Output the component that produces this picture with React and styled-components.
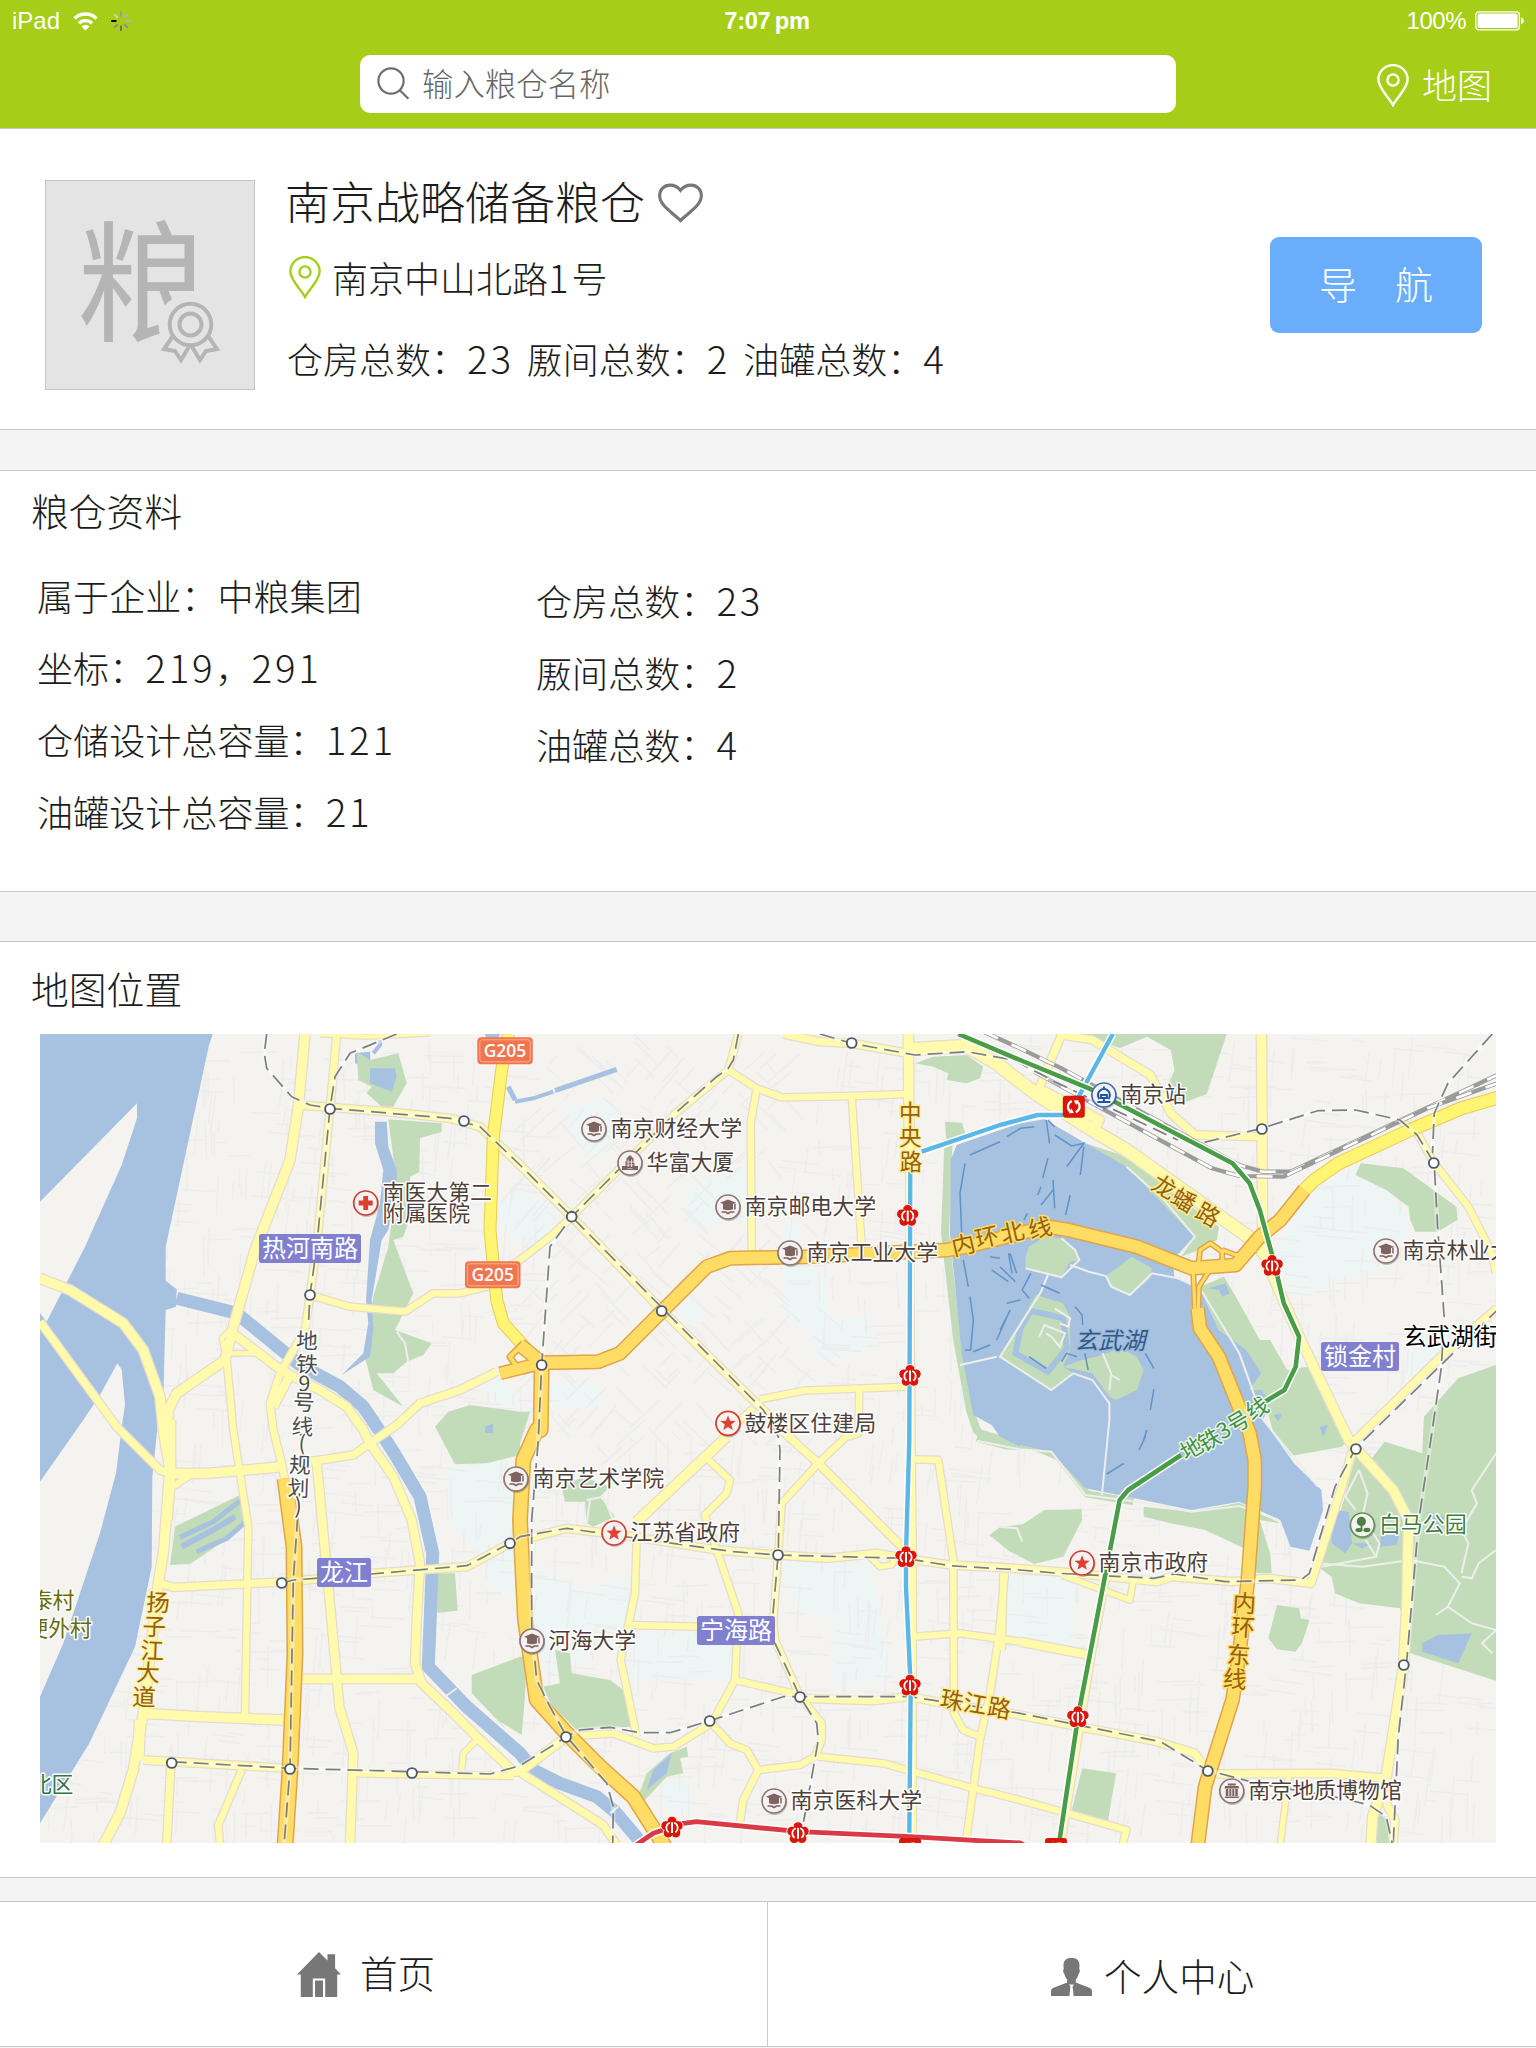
import React from "react";
import styled, { createGlobalStyle, css } from "styled-components";

const GlobalStyle = createGlobalStyle`
  *, *::before, *::after { box-sizing: border-box; }
  body {
    margin: 0;
    background: #f4f4f4;
    color: #1c1c1c;
    font-family: "Noto Sans CJK SC", "Liberation Sans", sans-serif;
    font-weight: 300;
  }
`;

/* ---------- page frame ---------- */

const Page = styled.div`
  width: 1536px;
  height: 2048px;
  display: flex;
  flex-direction: column;
  overflow: hidden;
`;

const Header = styled.header`
  height: 129px;
  background: #a6ce19;
  border-bottom: 1px solid #c8c8c8;
  color: #fff;
  display: flex;
  flex-direction: column;
`;

const StatusBar = styled.div`
  height: 40px;
  padding: 1px 11px 0 12px;
  display: grid;
  grid-template-columns: 1fr auto 1fr;
  align-items: center;
  font-family: "Liberation Sans", sans-serif;
  font-size: 24px;
  font-weight: 400;
  line-height: 40px;
`;

const StatusGroup = styled.div`
  display: flex;
  align-items: center;
  gap: ${(p) => p.$gap}px;
  justify-content: ${(p) => (p.$end ? "flex-end" : "flex-start")};
  letter-spacing: ${(p) => (p.$end ? "-0.5px" : "0")};
  svg { display: block; flex: none; }
`;

const Clock = styled.div`
  margin-right: 3px;
  font-weight: 700;
  font-size: 23.7px;
  letter-spacing: -0.3px;
  word-spacing: -2px;
`;

const SearchRow = styled.div`
  height: 88px;
  display: grid;
  grid-template-columns: 1fr 816px 1fr;
  align-items: center;
`;

const SearchBox = styled.div`
  grid-column: 2;
  height: 58px;
  padding-left: 16px;
  display: flex;
  align-items: center;
  gap: 12px;
  background: #fff;
  border-radius: 10px;
  color: #666;
  font-size: 31.4px;
  line-height: 50px;
  span { margin-top: -3px; }
`;

const MapLink = styled.div`
  justify-self: end;
  margin-right: 44px;
  padding-top: 3px;
  display: flex;
  align-items: center;
  gap: 13px;
  font-size: 35px;
  line-height: 50px;
  span { margin-top: -3px; }
`;

const Gap = styled.div`
  height: ${(p) => p.$h}px;
  flex: none;
`;

const Section = styled.section`
  flex: none;
  height: ${(p) => p.$h}px;
  background: #fff;
  border-bottom: 1px solid #c8c8c8;
  ${(p) => p.$topLine && css`border-top: 1px solid #c8c8c8;`}
`;

/* ---------- profile ---------- */

const Profile = styled(Section)`
  display: flex;
  align-items: flex-start;
  padding: 51px 54px 0 45px;
`;

const Thumb = styled.div`
  width: 210px;
  height: 210px;
  flex: none;
  background: #e4e4e4;
  border: 1px solid #c4c4c4;
  svg { display: block; }
`;

const Info = styled.div`
  flex: 1;
  padding-left: 30px;
  display: flex;
  flex-direction: column;
`;

const Name = styled.h1`
  margin: -6px 0 0;
  height: 54px;
  display: flex;
  align-items: center;
  gap: 12px;
  font-size: 45px;
  font-weight: 300;
  line-height: 54px;
  svg { margin-top: 5px; }
`;

const Address = styled.div`
  margin-top: 25px;
  padding-left: 4px;
  height: 48px;
  display: flex;
  align-items: center;
  gap: 11px;
  font-size: 36px;
  line-height: 44px;
  span { margin-top: -1px; }
`;

const Counts = styled.div`
  margin-top: 33px;
  padding-left: 2px;
  display: flex;
  gap: 13px;
  font-size: 36px;
  line-height: 48px;
`;

const Digits = styled.span`
  font-size: 38.5px;
  line-height: 1;
  letter-spacing: 2.8px;
`;

const NavigateButton = styled.button`
  margin-top: 57px;
  width: 212px;
  height: 96px;
  padding: 0 0 5px 49px;
  text-align: left;
  border: 0;
  border-radius: 9px;
  background: #6aadfb;
  color: #fff;
  font: inherit;
  font-size: 38px;
  letter-spacing: 38px;
  white-space: nowrap;
`;

/* ---------- details ---------- */

const SectionTitle = styled.h2`
  margin: 0;
  padding-left: 31px;
  font-size: 37.8px;
  font-weight: 300;
  line-height: 48px;
`;

const Details = styled(Section)`
  padding-top: 15px;
`;

const DetailColumns = styled.div`
  display: grid;
  grid-template-columns: 499px 1fr;
  align-items: start;
  padding: 25px 0 0 37px;
`;

const DetailList = styled.ul`
  margin: ${(p) => (p.$drop ? 5 : 0)}px 0 0;
  padding: 0;
  list-style: none;
  font-size: 36.1px;
  line-height: 72px;
`;

/* ---------- map ---------- */

const MapSection = styled(Section)`
  padding-top: 22px;
`;

const MapFrame = styled.div`
  margin: 22px 0 0 40px;
  width: 1456px;
  height: 809px;
  svg { display: block; }
`;

/* ---------- bottom tabs ---------- */

const Tabs = styled.nav`
  flex: none;
  height: 146px;
  display: grid;
  grid-template-columns: 768px 1fr;
  background: #fff;
  border-top: 1px solid #c8c8c8;
  border-bottom: 1px solid #c8c8c8;
`;

const Tab = styled.a`
  display: flex;
  align-items: flex-start;
  padding: ${(p) => p.$pad};
  gap: ${(p) => p.$gap}px;
  font-size: 37.6px;
  line-height: 48px;
  border-right: ${(p) => (p.$divider ? "1px solid #c8c8c8" : "0")};
  svg { display: block; flex: none; margin-top: ${(p) => p.$iconTop}px; }
`;

/* ---------- icons ---------- */

const WifiIcon = () => (
  <svg width="25" height="19" viewBox="0 0 25 19" fill="none" stroke="#fff" strokeWidth="3.4">
    <path d="M1.5 6.6a15.6 15.6 0 0 1 22 0" />
    <path d="M6 11.3a9.2 9.2 0 0 1 13 0" />
    <path d="M12.5 18.6l-4-4.2a5.7 5.7 0 0 1 8 0z" fill="#fff" stroke="none" />
  </svg>
);

const spokes = ["#9a9a9a", "#b4b4b4", "#b4b4b4", "#8c8c8c", "#6a6a6a", "#8a8f7a", "#000", "#d0dca0"];
const Spinner = () => (
  <svg width="20" height="20" viewBox="-10 -10 20 20">
    {spokes.map((c, i) => (
      <line key={i} x1="0" y1="-4.6" x2="0" y2="-9.8" stroke={c} strokeWidth="1.9" transform={`rotate(${i * 45})`} />
    ))}
  </svg>
);

const BatteryIcon = () => (
  <svg width="50" height="20" viewBox="0 0 50 20">
    <rect x="0.8" y="0.8" width="43.6" height="18" rx="3" fill="none" stroke="#fff" strokeWidth="1.3" />
    <rect x="2.6" y="2.6" width="40" height="14.4" rx="1.6" fill="#fff" />
    <path d="M46 6.6c3.8 1 3.8 5.6 0 6.6z" fill="#fff" />
  </svg>
);

const SearchIcon = () => (
  <svg width="34" height="34" viewBox="0 0 34 34" fill="none" stroke="#6e6e6e" strokeWidth="2.2">
    <circle cx="15" cy="14" r="12.6" />
    <path d="M23.8 23.2l8.6 8.6" />
  </svg>
);

const PinIcon = ({ color }) => (
  <svg width="32" height="43" viewBox="0 0 32 43" fill="none" stroke={color} strokeWidth="2.4">
    <path d="M16 41C12 33 1.4 24.6 1.4 15.6a14.6 14.6 0 0 1 29.2 0C30.6 24.6 20 33 16 41z" />
    <circle cx="16" cy="16" r="5.6" />
  </svg>
);

const HeartIcon = () => (
  <svg width="47" height="41" viewBox="0 0 48 42" fill="none" stroke="#777" strokeWidth="3.2">
    <path d="M24 38.5C17 31 2.6 23.5 2.6 12.8 2.6 6.8 7.4 2.2 13.2 2.2c4.5 0 8.2 2 10.8 5.4 2.6-3.4 6.3-5.4 10.8-5.4 5.8 0 10.6 4.6 10.6 10.6C45.4 23.5 31 31 24 38.5z" />
  </svg>
);

const GrainBadge = () => (
  <svg width="208" height="208" viewBox="46 181 208 208">
    <text x="76.5" y="331" fontSize="131" fontWeight="400" fill="#b5b5b5" fontFamily='"Noto Sans CJK SC", sans-serif'>粮</text>
    <circle cx="190.5" cy="325" r="32" fill="#e4e4e4" />
    <path d="M166 330h50v40h-60z" fill="#e4e4e4" />
    <g fill="#e4e4e4" stroke="#b5b5b5" strokeWidth="4">
      <path d="M173 336l-9 13 11 2 6 9 9-15" />
      <path d="M208 336l9 13-11 2-6 9-9-15" />
      <circle cx="190.5" cy="324.5" r="20.8" />
      <circle cx="190.5" cy="324.5" r="11" />
    </g>
  </svg>
);

const HomeIcon = () => (
  <svg width="44" height="45" viewBox="0 0 44 45" fill="#777">
    <path d="M22 0l8.5 8.6V2.2h7.6v14L44 22.5h-3.8V45H28.2V26.5H15.8V45H3.8V22.5H0z" />
    <rect x="18" y="28.5" width="8" height="16.5" />
  </svg>
);

const UserIcon = () => (
  <svg width="41" height="38" viewBox="0 0 41 38" fill="#777">
    <path d="M20.5 0c5.5 0 8.2 2.6 8 8l-.3 3c1 .4.8 3.6-.6 5-.5 2.5-1.6 4.4-2.8 5.6v3L39 30c1.5.8 2 2 2 3.5V38H22.6l-1-9.5 1.3-2h-4.8l1.3 2L18.4 38H0v-4.5C0 32 .5 30.8 2 30l14.2-5.4v-3c-1.2-1.2-2.3-3.1-2.8-5.6-1.4-1.4-1.6-4.6-.6-5l-.3-3c-.2-5.4 2.5-8 8-8z" />
  </svg>
);

/* ---------- map data ----------
   The map is surveyed in six sheets (A-F). A line is written as a list of
   points, and a sheet letter switches the origin and scale for what follows. */

const SHEETS = {
  A: [0, 930, 3],
  B: [500, 1020, 3],
  C: [1000, 1020, 2.925],
  D: [0, 1420, 3],
  E: [500, 1420, 3],
  F: [1000, 1420, 2.925],
};

const at = (sheet, x, y) => {
  const [ox, oy, k] = SHEETS[sheet];
  return [+(ox + x / k).toFixed(1), +(oy + y / 3).toFixed(1)];
};

const trace = (spec, closed) => {
  let sheet = "A";
  const pts = [];
  spec.trim().split(/\s+/).forEach((t) => {
    if (SHEETS[t]) sheet = t;
    else pts.push(at(sheet, ...t.split(",").map(Number)).join(" "));
  });
  return "M" + pts.join("L") + (closed ? "Z" : "");
};

const CAMPUS = [
  "B 190,270 320,230 350,280 345,350 310,400 260,415 200,310",
  "B 610,480 730,440 760,600 680,600 570,630 550,530",
  "B 0,540 50,520 150,550 190,560 150,640 90,690 0,600",
  "B 850,600 900,620 900,720 980,770 980,890 1110,890 1135,980 950,1030 930,940 850,900",
  "B 540,860 580,830 600,900 560,910",
  "B 150,1090 300,1090 300,1160 150,1165",
  "A 1440,1370 1500,1350 1560,1400 1560,1430 1500,1420",
  "A 1500,850 1560,780 1560,930 1530,920",
  "D 1335,150 1450,120 1560,130 1560,520 1480,520 1440,400 1355,320",
  "E 110,450 170,460 230,510 400,470 390,600 200,750 140,750 100,620",
  "E 410,640 700,640 690,780 380,780",
  "E 840,430 1110,430 1180,780 1070,800 1000,780 1000,600 900,570",
  "E 490,1090 560,1080 590,1150 540,1190 480,1140",
  "F 25,465 220,470 220,670 15,650",
  "C 905,510 1040,440 1150,530 1200,630 1130,740 860,830 800,700",
  "C 1180,1010 1300,920 1340,960 1210,1075",
];

const WATER = [
  "A 120,312 638,312 627,345 497,950 497,1052 530,1078 528,1130 497,1140 490,1400 D 475,0 457,170 455,440 405,680 268,970 120,1210",
  "A 1065,370 1110,365 1112,415 1065,400",
  "A 1455,312 1500,312 1490,340 1460,335",
];

const ISLANDS = [
  "A 120,815 411,520 411,565 365,705 255,950 140,1175 120,1150",
  "A 352,1300 365,1318 375,1425 D 368,0 348,160 300,340 190,670 120,830 120,185 250,0 A 300,1395",
];

const GREEN = [
  "A 1070,365 1110,390 1195,370 1220,460 1180,530 1145,530 1100,490 1115,470 1075,450",
  "A 1165,568 1325,580 1325,605 1260,625 1258,725 1230,740 1235,850 1210,920 1180,930 1240,1090 1185,1200 1295,1240 1270,1275 1220,1295 1180,1330 1130,1330 1210,1430 1120,1380 1095,1280 1120,1100 1165,950 1190,760",
  "A 1305,1490 1345,1445 1410,1425 1560,1445 B 90,1175 E 60,70 D 1560,105 1460,130 1365,133",
  "D 510,435 525,320 720,225 735,310 700,345 570,432",
  "D 1312,460 1365,460 1373,572 1312,578",
  "D 1415,765 1560,710 E 80,710 75,830 65,945 0,905 D 1520,930 1415,820",
  "E 130,800 180,790 165,690 210,700 215,760 330,780 370,810 395,920 230,930 150,850",
  "E 185,200 250,170 330,200 300,230 345,290 280,320 260,310 255,245 195,245",
  "E 560,980 565,1010 540,1015 550,1060 500,1070 430,1145 415,1130 440,1060 510,1000",
  "B 1245,130 1300,110 1400,105 1450,140 1440,175 1400,190 1340,180 1345,160 1300,140",
  "B 1335,305 1385,308 1400,350 1340,380",
  "E 1468,345 1500,322 1570,312 F 130,270 238,268 240,300 185,410 100,432 40,400 E 1530,395",
  "F 420,260 560,275 700,248 820,310 760,300 790,400 795,460 750,460 745,400 600,330 500,310 420,290",
  "C 245,42 663,42 605,222 520,255 480,225 510,150 500,90 430,50 350,85",
  "C 250,370 400,420 480,500 560,560 640,620 635,660 580,690 530,710 570,650 370,460",
  "C 1055,430 1180,445 1335,560 1338,600 1280,635 1215,635 1200,600 1195,560 1130,510 1040,465",
  "C 585,800 655,770 690,830 760,960 790,960 840,1050 900,1040 960,1120 1010,1240 F 1020,60 1000,80 850,108 800,40 C 765,1110 730,1110 765,1060 700,980 640,930 600,840",
  "C 1451,1035 1340,1075 1240,1190 F 1235,100 1125,65 1080,125 1040,110 1000,260 930,440 970,470 980,520 1050,550 1170,565 1200,700 1451,782",
  "F 810,555 875,565 880,595 905,600 885,665 865,695 810,688 785,655",
  "F 240,1045 340,1060 315,1205 210,1170",
  "F 1105,1180 1130,1190 1145,1269 1100,1269",
];

const LAKE =
  "B 1500,330 1370,375 1352,420 1350,640 1385,1000 1420,1185 1475,1215 E 1500,50 1560,80 F 60,75 150,95 250,205 300,215 560,270 700,245 820,300 850,380 905,392 945,270 940,210 860,130 770,0 C 790,1150 765,1110 730,1110 765,1060 720,990 640,930 600,840 585,805 510,770 505,720 570,650 370,440 250,370 130,298 60,310";

const PONDS = [
  "A 1110,415 1185,415 1190,440 1175,485 1110,460",
  "A 1125,575 1160,575 1165,650 1190,720 1190,780 1165,900 1145,930 1115,1110 1120,1200 1110,1280 1025,1335 1090,1270 1105,1180 1098,1110 1110,930 1140,820 1150,720 1125,640",
  "D 1455,20 1480,10 1478,40 1455,40",
  "E 515,1000 500,1060 440,1110 460,1050",
  "F 1235,670 1280,645 1380,640 1340,730 1235,695",
  "F 970,270 1020,275 1030,370 1010,400 970,370",
  "F 1030,370 1090,370 1060,385",
  "F 1250,275 1300,290 1290,330 1250,300",
  "F 935,20 960,15 945,50",
  "F 1115,345 1170,342 1160,375 1110,380",
  "C 610,805 660,790 672,820 650,830 640,810",
  "C 800,1185 825,1180 815,1205",
];

const LAKE_ISLANDS = [
  "C 75,710 85,680 130,650 180,655 220,690 232,720 205,725 180,772 75,745",
  "C 310,768 385,710 445,745 435,780 380,825 325,800",
  "C 0,1010 40,940 105,825 185,850 205,890 205,990 185,1040 215,1060 150,1110",
  "C 185,1040 240,1020 300,1005 350,985 400,1010 420,1050 400,1110 340,1140 320,1130 270,1060",
];

const CANALS = [
  [13, "A 530,1105 710,1150 790,1215 900,1305 1020,1370 1090,1430 1130,1490 D 1180,95 1260,230 1298,400 1292,560 1285,740 1400,860 1560,1000 E 100,1050 180,1090 290,1130 345,1175 400,1240 430,1275"],
  [4, "A 1120,370 1140,345 1140,330"],
  [5, "B 25,200 45,240"],
  [4, "B 45,245 100,235 160,215"],
  [5, "B 165,212 350,148"],
];

const BELTS = [
  [8, "B 1345,375 1335,640 1370,950 1410,1170 1430,1230 E 1440,40 1540,70"],
  [7, "E 1430,55 1520,78 F 100,80 170,110 255,222 390,245"],
];

const PATHS = [
  "C 140,765 120,815 0,1010 150,1110 215,1060 270,1080 320,1150 F 320,0 298,225",
  "C 205,735 260,755 310,768 325,800 380,825 445,760 520,775 585,805 700,1000 F 770,0 930,200",
  "C 75,745 180,772 232,720 220,690 180,655",
  "B 1380,1035 1490,1010",
  "C 300,1000 325,1060 320,1110 M C 350,1080 325,1065",
  "C 160,865 205,895 200,920 175,910",
  "C 115,950 130,915 190,940 175,980 150,950 135,940",
  "C 370,440 480,540 570,650 520,710",
  "E 1430,62 1560,88 F 150,95 250,225 400,245 560,275 700,258 815,300",
  "F 930,430 1060,440 1200,420 1300,440 1345,490 1310,560 1380,610 1451,630",
  "F 1451,100 1380,210 1395,250 1350,330 1370,370 1350,460",
  "F 1451,390 1400,430 1380,475 1350,470",
  "F 1310,560 1275,585 M F 1451,630 1410,670 1440,700",
  "F 1050,150 1075,220 1060,290 1110,370 1100,410",
  "F 1050,150 1010,230 1040,270",
  "F 940,440 1100,410 1070,360",
  "F 0,320 50,325 65,365",
  "E 260,240 310,230 340,300 M E 260,310 270,240",
  "A 1190,1205 1215,1240 1225,1295",
  "D 1335,830 1370,805",
  "E 330,1180 355,1160",
].flatMap((s) => s.split(" M "));

const RIPPLES = [
  "B 1500,365 1410,405", "B 1395,430 1380,520 1385,640", "B 1390,720 1405,800", "B 1410,830 1420,900 1412,990 1395,990",
  "B 1470,710 1500,715", "B 1475,750 1525,785", "B 1530,870 1490,960", "B 1470,975 1420,995", "B 1530,700 1550,760",
  "C 20,350 60,325 100,320", "C 135,300 145,370", "C 140,300 160,320", "C 160,345 210,378 245,370 195,440", "C 140,415 125,475",
  "C 155,480 160,565", "C 155,510 120,555", "C 205,525 192,585", "C 120,500 110,525", "C 245,380 235,465", "C 70,600 80,580",
  "C 90,760 65,810 85,835", "C 120,795 175,820", "C 25,700 35,760", "C 0,740 45,785", "C 220,860 240,885 242,915",
  "C 85,1010 135,1045", "C 180,1025 195,1000 225,1010", "C 248,1000 258,1050", "C 425,1000 450,1045", "C 450,1108 440,1170",
  "C 430,1230 420,1260", "F 428,30 425,50 407,90", "F 312,162 362,130", "C 60,840 20,850", "C 30,870 0,930",
];

const ROADS = [
  [9, "A 915,312 895,530 870,690 765,960 700,1190 675,1290 530,1390 505,1440 505,1500 D 510,160 490,400 475,490 430,880 415,960 400,1050 360,1180 310,1275"],
  [10, "D 510,0 510,160 D 500,300"],
  [6.5, "A 1010,312 990,535 950,950 930,1095 915,1200 840,1330 810,1420 820,1500 D 845,130 855,180"],
  [7, "A 900,525 990,532 1160,545 1350,565 1440,590 1560,705 B 215,590 485,870 790,1170 850,1235 E 955,130 1215,390"],
  [6, "E 1050,40 955,130 845,250 835,400 820,600 825,660 900,830 965,910 965,960 945,1010 900,1035 775,1050 730,1140 720,1205"],
  [4, "A 960,312 1100,320 1290,310"],
  [9, "A 120,1045 210,1080 370,1180 430,1260 480,1400 490,1500 D 510,150"],
  [7, "A 120,1175 350,1490 D 480,150 510,160"],
  [9, "D 500,160 620,160 850,140"],
  [6, "D 520,200 570,165"],
  [7, "D 930,125 1060,105 1110,70 1190,15 A 1260,1420 1380,1380 1490,1325"],
  [4, "A 680,1270 770,1270"],
  [4, "A 700,1190 665,1225 680,1290"],
  [8, "A 705,1215 830,1310 870,1335 960,1380 1040,1430 1090,1500 D 1110,70 1180,170 1235,300 1260,430 1250,600 1245,730 1265,790 1350,870 1430,950 1540,1055 E 60,1055 200,950"],
  [8, "A 870,1335 820,1430"],
  [7, "E 65,1060 310,1215 350,1275"],
  [6, "A 680,1290 700,1500 D 745,320 735,885"],
  [6, "A 930,1095 1050,1130 1215,1145 1300,1090 1380,1090 1460,1070 1500,1025 B 60,720 150,650 215,590 520,285 685,150 715,42"],
  [6, "B 685,150 770,205 845,232 1055,228 1225,222"],
  [6, "B 770,205 752,310 755,700"],
  [6, "B 1055,228 1085,680"],
  [7, "B 850,42 960,65 1055,70 1225,100"],
  [9, "B 1225,42 1228,420"],
  [6, "B 1228,420 1234,1200 E 1238,400 1238,1275"],
  [12, "B 1225,88 1400,78 1490,130 1560,185 C 110,225 270,330 370,390 740,660 790,720"],
  [9, "C 110,205 290,300 270,335"],
  [7, "C 110,215 180,45 270,60 440,165 500,280 570,345 760,350"],
  [9, "C 765,42 768,640"],
  [9, "C 785,740 880,960 1020,1260 F 1040,85 1150,210 1195,300 1190,560 1180,740 1130,1070 1090,1190 1085,1275"],
  [6, "C 1165,300 1215,330 1270,430 1370,560 1435,690 1451,760"],
  [7, "C 1455,865 1300,1000 1040,1260 F 1000,200 910,490 780,475 680,485 500,470 460,485 170,455 0,442 E 1350,435 1215,415 1130,400 980,415 835,405 650,390 400,350 200,325 30,370 D 1400,440 1115,460 870,485 520,502 480,490"],
  [5, "E 1110,410 1140,440 1175,435 1185,415"],
  [6, "E 410,350 405,520 385,615 600,620"],
  [6, "E 385,610 362,720 410,950"],
  [9, "E 680,50 410,305"],
  [6, "B 760,1165 680,1235 E 680,50"],
  [6, "E 610,105 690,180 680,220 615,285 650,390 715,580 705,780 635,910 520,980 460,985 340,940 200,950"],
  [6, "E 705,780 900,825"],
  [6, "E 635,910 690,970 740,990 775,1050"],
  [7, "E 900,835 1120,842 1230,830 1330,850 1530,880 F 460,965 570,1000 605,1050 640,1062 970,1060 1130,1075"],
  [6, "E 955,1010 1150,1030 1420,1105 1560,1140 F 370,1230 358,1275"],
  [6, "E 1245,118 1315,120 1360,420 1362,880 1390,930 1440,950"],
  [6, "E 1515,460 1495,660 1470,820 1440,960 1400,1250"],
  [6, "E 1240,650 1380,640 1560,665"],
  [8, "F 60,665 260,705"],
  [6, "F 10,460 5,690"],
  [5, "F 180,465 300,510 380,540 390,480"],
  [5, "F 310,480 270,700 180,1275"],
  [6, "B 780,1138 910,1112 1225,1100"],
  [6, "B 1078,1110 1075,1240 E 1045,50"],
  [9, "D 430,880 600,890 850,900"],
  [10, "D 420,900 415,1020"],
  [7, "D 430,1020 860,1045"],
  [6, "D 1060,1060 1540,1068"],
  [7, "D 512,1040 500,1275"],
  [6, "D 725,1050 655,1215 660,1275"],
  [8, "D 950,125 1010,770 1018,860 1060,1000 1050,1275"],
  [8, "D 900,777 1265,777"],
  [5, "D 1430,960 1390,1000 1385,1050"],
  [5, "F 845,1060 820,1275"],
  [7, "F 1130,1150 1155,1200 1150,1275"],
];

const HIGHWAYS = [
  [11, "A 1525,312 1505,420 1480,620 1470,900 1490,1110 1510,1180 1560,1235 B 100,1010"],
  [12, "C 1460,232 1350,265 1200,330 990,430 920,480 880,520"],
];

const EXPRESSWAYS = [
  [4, "B 70,970 30,1010 50,1040"],
  [11, "B 0,1060 130,1028"],
  [12, "B 60,975 125,1028 295,1025 360,1000 490,870 620,740 690,715 920,710 1340,690 1400,680 1560,640 C 140,620 200,630 400,680 560,745 690,735 760,650 820,600 890,510"],
  [3, "C 580,740 585,690 615,670 650,695 650,740"],
  [3, "C 650,690 690,705 750,690"],
  [3, "C 565,755 570,870"],
  [3, "C 610,755 582,800 580,870"],
  [12, "C 578,865 585,925 640,1010 730,1240 F 745,120 745,200 725,480 700,700 680,840 640,970 600,1100 578,1280"],
  [13, "B 125,1035 122,1230 E 110,30 70,120 60,300 75,600 110,840 200,940 300,1040 400,1130 495,1280"],
  [14, "D 855,175 882,380 885,700 870,1050 855,1280"],
];

const PLANNED_METRO = [
  "A 800,312 793,370 800,415 875,500 930,525 990,535 1350,565 1440,590 1560,705 B 215,590 790,1170 835,1250 E 840,90 835,400 818,590 825,670 900,830 950,910 955,960 930,1100 910,1210",
  "A 1190,312 1050,370 1005,440 990,535 950,950 930,1095 925,1190",
  "D 893,290 880,480 870,1045 852,1275",
  "B 715,42 700,120 685,145 650,170 520,285 215,590 150,680 125,1035 115,1260 E 95,300 95,620 110,780 150,860 200,950 320,1090 340,1160 338,1275",
  "B 960,42 1055,70 1245,105 1400,95 C 40,120 160,185 520,360",
  "C 598,367 765,325 930,272 1040,270 1170,300 1220,345 1270,430 1280,620 1300,900 1290,1050 1260,1260 F 1225,300 1190,720 1165,950 1150,1275",
  "C 1440,42 1310,190 1270,280 1265,400",
  "D 845,490 880,480 1115,462 1400,437 1530,370 E 60,350 200,325 340,345 700,395 835,405 1215,415 1350,437 1560,450 F 170,460 450,475 510,462 660,485 880,480 905,460 980,200 1040,85 1125,0 C 1455,870",
  "D 515,1025 870,1045 1235,1055 1470,1062 1560,1037 E 200,950 240,930 330,922 420,938 510,938 630,902 850,830 900,830 1230,830 1330,845 1560,880 F 470,965 605,1050 750,1090 1000,1135 1080,1155 1130,1190 1148,1275",
];

const RAILWAYS = [
  "B 1450,35 1560,85 C 180,145 700,435 770,455 850,455 1455,165",
  "C 100,155 620,445 700,468 830,470 1250,265 1455,190",
];

const METRO = [
  ["#5bb7e6", 4.4, "C 330,42 230,230"],
  ["#5bb7e6", 4.4, "C 185,285 110,285 0,315 B 1265,395"],
  ["#5bb7e6", 4.4, "B 1231,455 1228,1260 E 1218,400 1218,500 1232,800 1228,1250"],
  ["#4a9d47", 4.6, "B 1375,42 1560,120 C 260,205 680,430 730,490 760,570 800,720 830,850 875,950 865,1040 832,1110 775,1145"],
  ["#4a9d47", 4.6, "F 530,105 375,210 350,240 230,880 172,1275"],
  ["#d93a45", 4.8, "E 405,1277 460,1240 550,1210 590,1205 900,1235 1230,1250 1560,1269 F 70,1275"],
];

const STATIONS = [
  ["B", 1223, 588], ["B", 1230, 1068], ["C", 796, 738], ["E", 1218, 412], ["E", 1230, 797],
  ["F", 228, 892], ["E", 516, 1223], ["E", 894, 1240],
];

const STOPS = [
  ["A", 990, 537], ["A", 1392, 573], ["A", 930, 1095], ["B", 1055, 69], ["B", 215, 590], ["B", 485, 873],
  ["B", 125, 1035], ["C", 766, 327], ["C", 1269, 429], ["D", 845, 489], ["D", 515, 1029], ["D", 870, 1047],
  ["D", 1236, 1059], ["E", 30, 370], ["E", 834, 405], ["E", 900, 831], ["E", 629, 903], ["E", 198, 951],
  ["F", 1041, 87], ["F", 1181, 735], ["F", 608, 1053],
];

const POIS = [
  ["school", "B", 282, 327, "南京财经大学"],
  ["tower", "B", 390, 429, "华富大厦"],
  ["school", "B", 684, 561, "南京邮电大学"],
  ["school", "B", 870, 699, "南京工业大学"],
  ["star", "B", 684, 1210, "鼓楼区住建局"],
  ["school", "E", 48, 177, "南京艺术学院"],
  ["star", "E", 342, 339, "江苏省政府"],
  ["school", "E", 96, 663, "河海大学"],
  ["school", "E", 822, 1143, "南京医科大学"],
  ["train", "C", 304, 225, "南京站"],
  ["school", "C", 1129, 693, "南京林业大学"],
  ["star", "F", 240, 429, "南京市政府"],
  ["tree", "F", 1060, 315, "白马公园"],
  ["museum", "F", 678, 1113, "南京地质博物馆"],
  ["cross", "A", 1097, 819, ""],
];

const BADGES = [
  ["A", 777, 912, 102, "热河南路"],
  ["D", 951, 414, 54, "龙江"],
  ["E", 591, 588, 78, "宁海路"],
  ["C", 939, 966, 78, "锁金村"],
];

/* Street names whose characters are set one by one along the street. */
const STREET_NAMES = [
  { fill: "#96600c", halo: "#ffee96", rot: 0, size: 22.5, chars: [["中", "B", 1231, 280], ["央", "B", 1231, 350], ["路", "B", 1233, 425]] },
  { fill: "#96600c", halo: "#ffdc64", rot: -13, size: 23.5, chars: [["内", "B", 1390, 675], ["环", "B", 1460, 651], ["北", "B", 1537, 637], ["线", "C", 117, 624]] },
  { fill: "#96600c", halo: "#ffee96", rot: 30, size: 23.5, chars: [["龙", "C", 480, 500], ["蟠", "C", 537, 541], ["路", "C", 608, 584]] },
  { fill: "#96600c", halo: "#ffee96", rot: 10, size: 23.5, chars: [["珠", "E", 1356, 841], ["江", "E", 1426, 852], ["路", "E", 1498, 865]] },
  { fill: "#96600c", halo: "#ffdc64", rot: 4, size: 23.5, chars: [["内", "F", 715, 550], ["环", "F", 711, 622], ["东", "F", 698, 705], ["线", "F", 687, 777]] },
  { fill: "#96600c", halo: "#fff3a8", rot: 2, size: 23.5, chars: [["扬", "D", 474, 548], ["子", "D", 463, 620], ["江", "D", 457, 692], ["大", "D", 444, 758], ["道", "D", 432, 832]] },
  { fill: "#4c4c4c", halo: "#fff", rot: 2, size: 21.8, chars: [["地", "A", 921, 1232], ["铁", "A", 921, 1303], ["9", "A", 913, 1360], ["号", "A", 912, 1417], ["线", "D", 907, 20], ["(", "D", 907, 70], ["规", "D", 900, 135], ["划", "D", 895, 205], [")", "D", 895, 258]] },
  { fill: "#3f9045", halo: "#eaf5ea", rot: -30, size: 22, chars: [["地", "F", 560, 86], ["铁", "F", 612, 60], ["3", "F", 654, 30], ["号", "F", 697, 6], ["线", "C", 752, 1165]] },
];

/* Faint back streets: small seeded grids spread over the land. */
const backStreets = (() => {
  let seed = 7;
  const rnd = () => ((seed = (seed * 16807) % 2147483647) / 2147483647);
  let d = "";
  for (let gx = 60; gx < 1490; gx += 48) {
    for (let gy = 1050; gy < 1840; gy += 44) {
      const cx = gx + rnd() * 26;
      const cy = gy + rnd() * 22;
      const a = (cx > 520 && cx < 800 && cy < 1450 ? 0.78 : 0.05) + (rnd() - 0.5) * 0.2;
      const c = Math.cos(a);
      const s = Math.sin(a);
      for (let i = 0; i < 5; i++) {
        const u = (rnd() - 0.5) * 44;
        const v = (rnd() - 0.5) * 40;
        const l = 12 + rnd() * 30;
        const flip = rnd() > 0.5;
        const dx = flip ? -s * l : c * l;
        const dy = flip ? c * l : s * l;
        d += `M${(cx + u).toFixed(1)} ${(cy + v).toFixed(1)}l${dx.toFixed(1)} ${dy.toFixed(1)}`;
      }
    }
  }
  return d;
})();

const Lines = ({ items, color, extra = 0 }) =>
  items.map(([w, spec], i) => <path key={i} d={trace(spec)} stroke={color} strokeWidth={w + extra} />);

const Areas = ({ items, fill }) => <path d={items.map((s) => trace(s, true)).join("")} fill={fill} />;

const petals = [0, 72, 144, 216, 288];
const MetroFlower = ({ x, y }) => (
  <g transform={`translate(${x} ${y})`}>
    <g fill="#d81708" stroke="#fff" strokeWidth="0.8">
      {petals.map((r) => <circle key={r} cx="0" cy="-6.5" r="5" transform={`rotate(${r})`} />)}
    </g>
    <circle r="8" fill="#d81708" />
    <path d="M-3.4 4.6C-7.2 1.4-5.8-3.8-2.2-5M3.4 4.6C7.2 1.4 5.8-3.8 2.2-5" fill="none" stroke="#fff" strokeWidth="1.7" />
    <path d="M0-5.4V5.4" stroke="#fff" strokeWidth="2" />
  </g>
);

const TransferMark = ({ x, y }) => (
  <g transform={`translate(${x} ${y})`}>
    <rect x="-11" y="-11" width="22" height="22" rx="3" fill="#d81708" />
    <path d="M-2-5.6C-7-3-7 3-2.5 5.6M2 5.6C7 3 7-3 2.5-5.6" fill="none" stroke="#fff" strokeWidth="2.2" />
    <path d="M-5 6.5l5-.3-2.3-4.5zM5-6.5l-5 .3L2.3-1.7z" fill="#fff" />
  </g>
);

const GLYPHS = {
  school: <g fill="#7d6461"><path d="M0-7.5l8 3.3-8 3.3-8-3.3z" /><path d="M-5-3.5h10v5.7c-3 1.5-7 1.5-10 0z" /><path d="M6.2-3.5h1.5v6H6.2z" /><path d="M-6.5 4.2h4.5l2 1.2 2-1.2h4.5v1.5H3L0 7.5l-3-1.8h-3.5z" /></g>,
  tower: <g fill="#7d6461"><path d="M-3.5 5V-4.500L0-8l3.500 3.500V5z" /><path d="M-8 7V3h3.500v-5h2v9zM8 7V3H4.500v-3h-2v7z" /><path d="M-8 5.500H8V7H-8z" /><path d="M-1.800-3.500v7.500M1.500-3.500v7.500M-3.500-1h7M-3.500 2h7" stroke="#f3efef" strokeWidth=".8" /></g>,
  museum: <g fill="#7d6461"><path d="M-7-5h14v2.500H-7zM-4-7.500h8v2H-4zM-6-2h2.500v7H-6zM-2.500-2h2v7h-2zM.5-2h2v7h-2zM3.500-2H6v7H3.500zM-7 5.500H7V7H-7z" /></g>,
  star: <path fill="#df4031" d="M0-7.800l2 5.300 5.600.3-4.400 3.500 1.500 5.500L0 3.700l-4.700 3.100 1.500-5.500-4.400-3.500 5.600-.3z" />,
  cross: <path fill="#d9402f" d="M-2.400-7h4.800v4.600H7v4.800H2.400V7h-4.800V2.400H-7v-4.800h4.600z" />,
  tree: <g fill="#4d7f43"><circle cx="-1" cy="-3.6" r="4.6" /><path d="M-1.800-1h1.800v7h-1.800z" /><ellipse cx="-3.5" cy="5" rx="3.5" ry="2" /><ellipse cx="4.5" cy="5" rx="3.5" ry="2.2" /></g>,
  train: <g fill="none" stroke="#1f55a5" strokeWidth="2"><path d="M-4.500 4A6 6 0 1 1 4.500 4" /><path d="M0-8.500v3M-6.500 7h13M-3 0h6v3h-6zM0 3v4" /></g>,
};
const RING = { star: "#d23c30", cross: "#d23c30", tree: "#5f9456", train: "#3f6cb4" };
const LABEL_FILL = { tree: "#3f7d43" };

const Poi = ({ kind, x, y, label }) => (
  <>
    <g transform={`translate(${x} ${y})`}>
      <circle cx="0.8" cy="1.6" r="12.4" fill="#000" opacity=".22" />
      <circle r="12" fill="#f6f2f2" stroke={RING[kind] || "#8d7673"} strokeWidth="1.7" />
      {GLYPHS[kind]}
    </g>
    {label && <MapText x={x + 16.5} y={y + 7.3} size={21.95} fill={LABEL_FILL[kind] || "#4f3f3c"}>{label}</MapText>}
  </>
);

const Halo = styled.text`
  font-family: "Noto Sans CJK SC", "Liberation Sans", sans-serif;
  font-weight: 400;
  paint-order: stroke;
  stroke-linejoin: round;
  stroke-width: 3px;
`;

const MapText = ({ size = 22, fill = "#4f3f3c", halo = "#fff", children, ...rest }) => (
  <Halo fontSize={size} fill={fill} stroke={halo} {...rest}>{children}</Halo>
);

const Shield = ({ x, y, label }) => (
  <g transform={`translate(${x} ${y})`}>
    <rect width="55.5" height="27" rx="4" fill="#f17650" />
    <rect x="2.5" y="2.5" width="50.5" height="22" rx="2.5" fill="none" stroke="#f9b08f" strokeWidth="1" />
    <text x="27.7" y="20" textAnchor="middle" fontSize="18.5" fontWeight="600" textLength="42.5" lengthAdjust="spacingAndGlyphs" fill="#fff" fontFamily='"Open Sans", "Noto Sans", sans-serif'>{label}</text>
  </g>
);

const DistrictMap = () => (
  <svg width="1456" height="809" viewBox="40 1034 1456 809">
    <rect x="40" y="1034" width="1456" height="809" fill="#f4f3f0" />
    <Areas items={CAMPUS} fill="#edf6f4" />
    <path d={backStreets} stroke="#ededee" strokeWidth="1.6" fill="none" />
    <Areas items={WATER} fill="#a7c1e0" />
    <Areas items={ISLANDS} fill="#f4f3f0" />
    <Areas items={GREEN} fill="#c2dcb9" />
    <g fill="none">
      <Lines items={CANALS} color="#a7c1e0" />
      <Lines items={BELTS} color="#c2dcb9" />
      <Lines items={[[5, "D 540,352 640,305 720,242"], [6, "D 545,380 640,330 705,290"], [5, "D 590,395 680,355 735,308"]]} color="#a7c1e0" />
    </g>
    <path d={trace(LAKE, true)} fill="#a7c1e0" />
    <Areas items={PONDS} fill="#a7c1e0" />
    <Areas items={LAKE_ISLANDS} fill="#c2dcb9" />
    <path d={trace("C 60,925 90,872 185,895 195,985 140,1055 45,1000", true)} fill="none" stroke="#a7c1e0" strokeWidth="6" />
    <path d={PATHS.map((s) => trace(s)).join("")} fill="none" stroke="#eeeeec" strokeWidth="2" />
    <path d={RIPPLES.map((s) => trace(s)).join("")} fill="none" stroke="#5f94c9" strokeWidth="1.5" />

    <g fill="none" strokeLinejoin="round">
      <Lines items={ROADS} color="#e6dccb" extra={2.8} />
      <Lines items={ROADS} color="#fffaac" extra={0.3} />
      <Lines items={HIGHWAYS} color="#ecc95a" extra={2} />
      <Lines items={HIGHWAYS} color="#fff572" />
      <Lines items={EXPRESSWAYS} color="#dfa548" extra={3} />
      <Lines items={EXPRESSWAYS} color="#ffdc64" />
      {RAILWAYS.map((s, i) => (
        <g key={i}>
          <path d={trace(s)} stroke="#9b9b9b" strokeWidth="4.2" />
          <path d={trace(s)} stroke="#fff" strokeWidth="2.6" strokeDasharray="16 15" />
        </g>
      ))}
      {PLANNED_METRO.map((s, i) => (
        <g key={i}>
          <path d={trace(s)} stroke="#fff" strokeOpacity=".4" strokeWidth="4.5" />
          <path d={trace(s)} stroke="#7c7f80" strokeWidth="1.7" strokeDasharray="15 7" />
        </g>
      ))}
      {METRO.map(([c, w, s], i) => (
        <g key={i}>
          <path d={trace(s)} stroke="#fff" strokeWidth={w + 3} />
          <path d={trace(s)} stroke={c} strokeWidth={w} />
        </g>
      ))}
    </g>

    {STOPS.map(([s, x, y], i) => {
      const [cx, cy] = at(s, x, y);
      return <circle key={i} cx={cx} cy={cy} r="4.9" fill="#fff" stroke="#4d586c" strokeWidth="1.9" />;
    })}
    {STATIONS.map(([s, x, y], i) => {
      const [cx, cy] = at(s, x, y);
      return <MetroFlower key={i} x={cx} y={cy} />;
    })}
    <TransferMark x={1073.8} y={1106.7} />
    <TransferMark x={910} y={1849} />
    <TransferMark x={1056} y={1849} />

    <Shield x={477.3} y={1037.3} label="G205" />
    <Shield x={465} y={1261.3} label="G205" />

    {STREET_NAMES.map((street, i) =>
      street.chars.map(([ch, s, x, y]) => {
        const [cx, cy] = at(s, x, y);
        return (
          <MapText key={i + ch} size={street.size} fill={street.fill} halo={street.halo} textAnchor="middle"
            transform={`translate(${cx} ${cy}) rotate(${street.rot})`} y={street.size * 0.36}>
            {ch}
          </MapText>
        );
      })
    )}

    {POIS.map(([kind, s, x, y, label]) => {
      const [cx, cy] = at(s, x, y);
      return <Poi key={kind + x} kind={kind} x={cx} y={cy} label={label} />;
    })}
    <MapText x="382.5" y="1200" size={21.9}>南医大第二</MapText>
    <MapText x="382.5" y="1221" size={21.9}>附属医院</MapText>

    {BADGES.map(([s, x, y, w, label]) => {
      const [bx, by] = at(s, x, y);
      return (
        <g key={label}>
          <rect x={bx} y={by} width={w} height="29" rx="2.5" fill="#807fd0" />
          <text x={bx + w / 2} y={by + 23} textAnchor="middle" fontSize="24" fontWeight="400" fill="#fff">{label}</text>
        </g>
      );
    })}

    <MapText x="1074.5" y="1349" size={23.6} fill="#2f5986" halo="#9fbbdc" fontStyle="italic">玄武湖</MapText>
    <MapText x="1403" y="1345" size={23.6} fill="#000">玄武湖街道</MapText>
    <MapText x="74.5" y="1608" size={21.9} fill="#6b6a06" textAnchor="end">泰村</MapText>
    <MapText x="92" y="1636" size={21.9} fill="#6b6a06" textAnchor="end">埂外村</MapText>
    <MapText x="73.5" y="1792" size={21.9} fill="#36704a" textAnchor="end">北区</MapText>
  </svg>
);

/* ---------- screen ---------- */

const Field = ({ label, value }) => (
  <>{label}：<Digits>{value}</Digits></>
);

export default function App() {
  return (
    <Page>
      <GlobalStyle />
      <Header>
        <StatusBar>
          <StatusGroup $gap={13}>
            <span>iPad</span>
            <WifiIcon />
            <Spinner />
          </StatusGroup>
          <Clock>7:07 pm</Clock>
          <StatusGroup $end $gap={9}>
            <span>100%</span>
            <BatteryIcon />
          </StatusGroup>
        </StatusBar>
        <SearchRow>
          <SearchBox>
            <SearchIcon />
            <span>输入粮仓名称</span>
          </SearchBox>
          <MapLink>
            <PinIcon color="#fff" />
            <span>地图</span>
          </MapLink>
        </SearchRow>
      </Header>

      <Profile $h={301}>
        <Thumb><GrainBadge /></Thumb>
        <Info>
          <Name>
            <span>南京战略储备粮仓</span>
            <HeartIcon />
          </Name>
          <Address>
            <PinIcon color="#a6ce19" />
            <span>南京中山北路<Digits>1</Digits>号</span>
          </Address>
          <Counts>
            <span><Field label="仓房总数" value="23" /></span>
            <span><Field label="厫间总数" value="2" /></span>
            <span><Field label="油罐总数" value="4" /></span>
          </Counts>
        </Info>
        <NavigateButton>导航</NavigateButton>
      </Profile>

      <Gap $h={40} />

      <Details $h={422} $topLine>
        <SectionTitle>粮仓资料</SectionTitle>
        <DetailColumns>
          <DetailList>
            <li>属于企业：中粮集团</li>
            <li>坐标：<Digits>219</Digits>，<Digits>291</Digits></li>
            <li><Field label="仓储设计总容量" value="121" /></li>
            <li><Field label="油罐设计总容量" value="21" /></li>
          </DetailList>
          <DetailList $drop>
            <li><Field label="仓房总数" value="23" /></li>
            <li><Field label="厫间总数" value="2" /></li>
            <li><Field label="油罐总数" value="4" /></li>
          </DetailList>
        </DetailColumns>
      </Details>

      <Gap $h={49} />

      <MapSection $h={937} $topLine>
        <SectionTitle>地图位置</SectionTitle>
        <MapFrame><DistrictMap /></MapFrame>
      </MapSection>

      <Gap $h={23} />

      <Tabs>
        <Tab $divider $pad="46px 0 0 297px" $gap={19} $iconTop={4}>
          <HomeIcon />
          <span>首页</span>
        </Tab>
        <Tab $pad="49px 0 0 283px" $gap={12} $iconTop={7}>
          <UserIcon />
          <span>个人中心</span>
        </Tab>
      </Tabs>
    </Page>
  );
}
